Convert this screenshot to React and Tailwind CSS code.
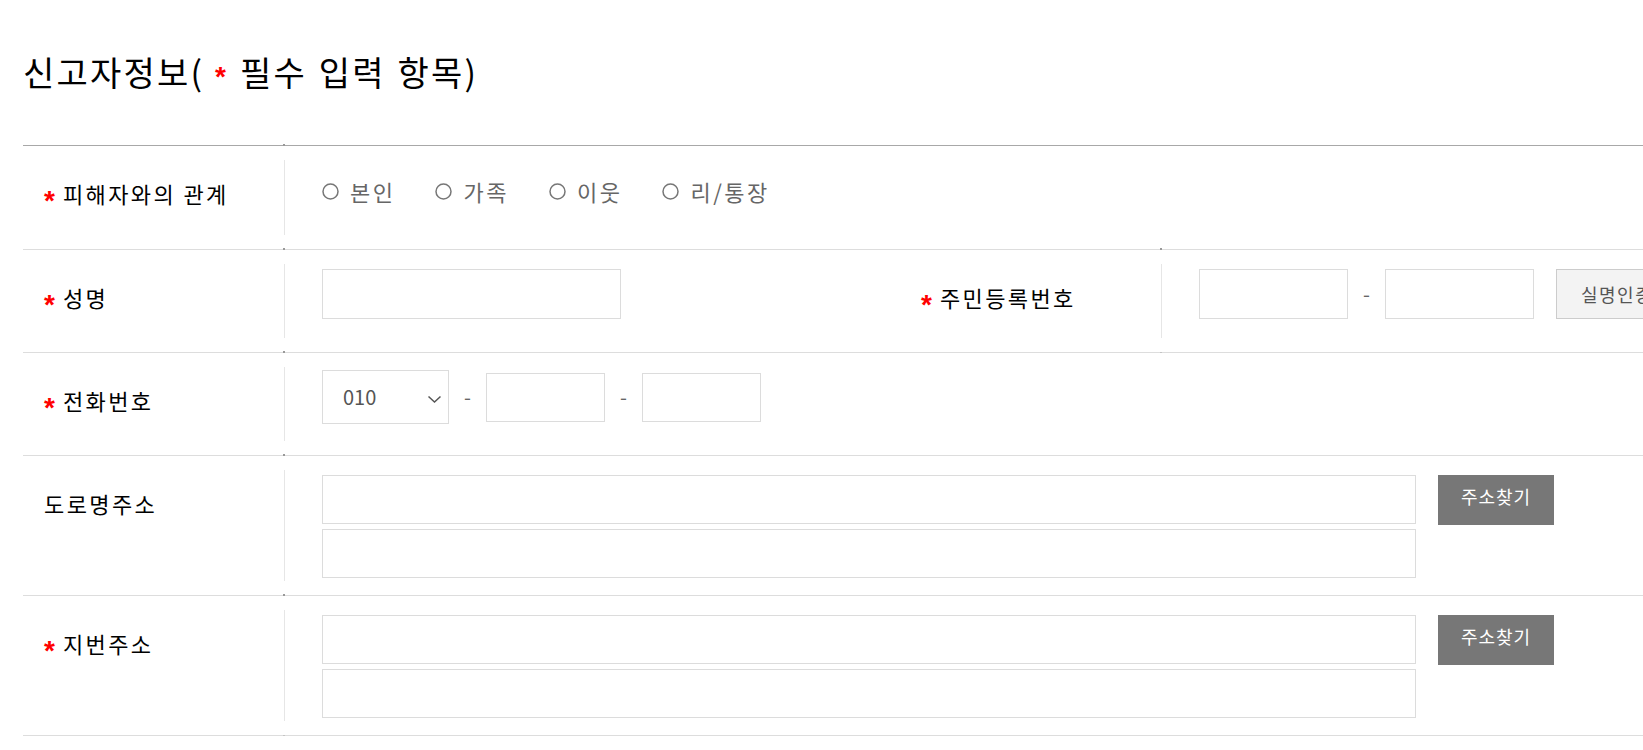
import React from "react";

function Star({ className = "" }) {
  return (
    <span
      className={
        "inline-block font-['Liberation_Sans',sans-serif] font-bold text-[28px] leading-none tracking-normal text-[#ff0000] " +
        className
      }
    >
      *
    </span>
  );
}

function Label({ children, required }) {
  return (
    <div className="relative w-[262px] shrink-0 py-[14px]">
      <span className="absolute right-[0px] top-[-2px] h-[2px] w-[2px] bg-[#999]" />
      <span className="absolute bottom-[-1px] right-[0px] h-[1px] w-[2px] bg-[#c4c4c4]" />
      <div className="h-full border-r border-[#e6e6e6] pl-[21px] pt-[18px]">
        <div className="flex h-[30px] items-center text-[22px] leading-[30px] tracking-[2.4px] text-black">
          {required && <Star className="mr-[8px] translate-y-[8px]" />}
          <span>{children}</span>
        </div>
      </div>
    </div>
  );
}

function Radio({ children }) {
  return (
    <label className="mr-[40px] flex h-[30px] items-center">
      <svg width="17" height="17" viewBox="0 0 17 17">
        <circle cx="8.5" cy="8.5" r="7.5" fill="none" stroke="#777" strokeWidth="1.5" />
      </svg>
      <span className="ml-[11px] text-[22px] leading-[30px] tracking-[2.5px] text-[#666]">{children}</span>
    </label>
  );
}

function Dash() {
  return <span className="w-[37px] text-center text-[20px] text-[#666]">-</span>;
}

function Field({ className }) {
  return <input type="text" className={"border border-[#dcdcdc] bg-white outline-none " + className} />;
}

function AddressCell() {
  return (
    <div className="flex flex-1 items-start pl-[37px] pt-[19px]">
      <div className="flex flex-col gap-[5px]">
        <Field className="h-[49px] w-[1094px]" />
        <Field className="h-[49px] w-[1094px]" />
      </div>
      <button className="ml-[22px] h-[50px] w-[116px] bg-[#777777] pb-[8px] text-[18px] tracking-[1px] text-white">
        주소찾기
      </button>
    </div>
  );
}

export default function App() {
  return (
    <div className="h-[750px] w-[1643px] overflow-hidden bg-white font-['Noto_Sans_CJK_KR',sans-serif]">
      <div className="pl-[23px]">
        <h2 className="h-[145px] pt-[52px] text-[34px] leading-[40px] tracking-[2.2px] text-black [word-spacing:2px]">
          신고자정보(
          <Star className="ml-[11px] mr-[14px]" />
          필수 입력 항목)
        </h2>

        <div className="w-[1700px] border-t border-[#a8a8a8]">
          {/* 피해자와의 관계 */}
          <div className="flex h-[104px] border-b border-[#dddddd]">
            <Label required>피해자와의 관계</Label>
            <div className="flex pl-[37px] pt-[30px]">
              <Radio>본인</Radio>
              <Radio>가족</Radio>
              <Radio>이웃</Radio>
              <Radio>리/통장</Radio>
            </div>
          </div>

          {/* 성명 / 주민등록번호 */}
          <div className="flex h-[103px] border-b border-[#dddddd]">
            <Label required>성명</Label>
            <div className="w-[615px] shrink-0 pl-[37px] pt-[19px]">
              <Field className="h-[50px] w-[299px]" />
            </div>
            <Label required>주민등록번호</Label>
            <div className="flex items-start pl-[37px] pt-[19px]">
              <div className="flex items-center">
                <Field className="h-[50px] w-[149px]" />
                <Dash />
                <Field className="h-[50px] w-[149px]" />
              </div>
              <button className="ml-[22px] h-[50px] whitespace-nowrap border border-[#cccccc] bg-[#f3f3f3] px-[24px] text-[18px] tracking-[1.5px] text-[#555]">
                실명인증
              </button>
            </div>
          </div>

          {/* 전화번호 */}
          <div className="flex h-[103px] border-b border-[#dddddd]">
            <Label required>전화번호</Label>
            <div className="flex items-start pl-[37px] pt-[17px]">
              <div className="flex items-center">
                <div className="relative flex h-[54px] w-[127px] items-center border border-[#dcdcdc] bg-white pl-[20px] text-[20px] text-[#555]">
                  <span>010</span>
                  <svg className="absolute right-[6px] top-[24px]" width="15" height="9" viewBox="0 0 15 9">
                    <polyline points="1.5,1.5 7.5,7 13.5,1.5" fill="none" stroke="#555" strokeWidth="1.5" />
                  </svg>
                </div>
                <Dash />
                <Field className="h-[49px] w-[119px]" />
                <Dash />
                <Field className="h-[49px] w-[119px]" />
              </div>
            </div>
          </div>

          {/* 도로명주소 */}
          <div className="flex h-[140px] border-b border-[#dddddd]">
            <Label>도로명주소</Label>
            <AddressCell />
          </div>

          {/* 지번주소 */}
          <div className="flex h-[140px] border-b border-[#dddddd]">
            <Label required>지번주소</Label>
            <AddressCell />
          </div>
        </div>
      </div>
    </div>
  );
}
